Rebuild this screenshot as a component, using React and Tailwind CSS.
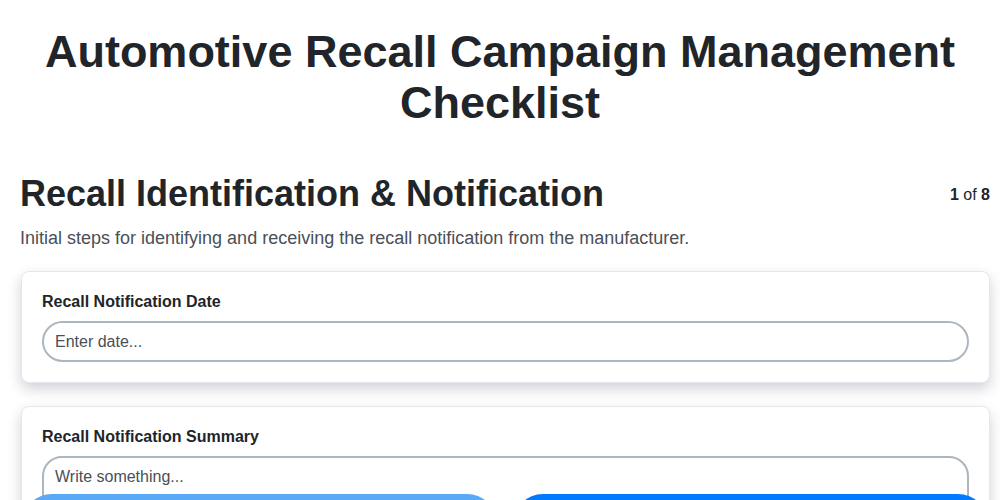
export default function App() {
  return (
    <div className="min-h-screen bg-white text-[#212529]" style={{ fontFamily: '"Liberation Sans", Arial, sans-serif' }}>
      <div className="pt-[26px]">
        <h1 className="px-5 text-center text-[45px] font-bold leading-[51px]">
          Automotive Recall Campaign Management Checklist
        </h1>
        <div className="pl-5 pr-[10px]">
          <div className="mt-[44px] flex items-start justify-between">
            <h2 className="text-[36px] font-bold leading-[44px]">Recall Identification &amp; Notification</h2>
            <div className="mt-[11px] text-[16px]">
              <span className="font-bold">1</span> of <span className="font-bold">8</span>
            </div>
          </div>
          <p className="mt-[10px] text-[18px] leading-[24px] text-[#495057]">
            Initial steps for identifying and receiving the recall notification from the manufacturer.
          </p>
          <div className="mt-[21px] ml-px flex flex-col gap-[23px]">
            <div className="rounded-lg border border-[#e6e6ee] bg-white px-[20px] pt-[20px] pb-[20px] shadow-[0_6px_14px_rgba(30,30,60,0.2)]">
              <label className="block text-[16px] font-bold leading-[20px]">Recall Notification Date</label>
              <input
                className="mt-[9px] block h-[41px] w-full rounded-full border-2 border-[#adb5bd] px-[11px] text-[16px] text-[#212529] placeholder:text-[#495057] outline-none"
                placeholder="Enter date..."
              />
            </div>
            <div className="rounded-lg border border-[#e6e6ee] bg-white px-[20px] pt-[20px] pb-[20px] shadow-[0_6px_14px_rgba(30,30,60,0.2)]">
              <label className="block text-[16px] font-bold leading-[20px]">Recall Notification Summary</label>
              <textarea
                className="mt-[9px] block h-[100px] w-full resize-none rounded-[20px] border-2 border-[#adb5bd] px-[11px] py-[7px] text-[16px] text-[#212529] placeholder:text-[#495057] outline-none"
                placeholder="Write something..."
              />
            </div>
          </div>
        </div>
      </div>
      <div className="fixed inset-x-0 top-[494px] flex gap-4 pl-[22px] pr-[12px]">
        <button className="h-[60px] flex-1 rounded-full bg-[#5aa9f7] text-white font-bold">Previous</button>
        <button className="h-[60px] flex-1 rounded-full bg-[#007bff] text-white font-bold">Next</button>
      </div>
    </div>
  );
}
